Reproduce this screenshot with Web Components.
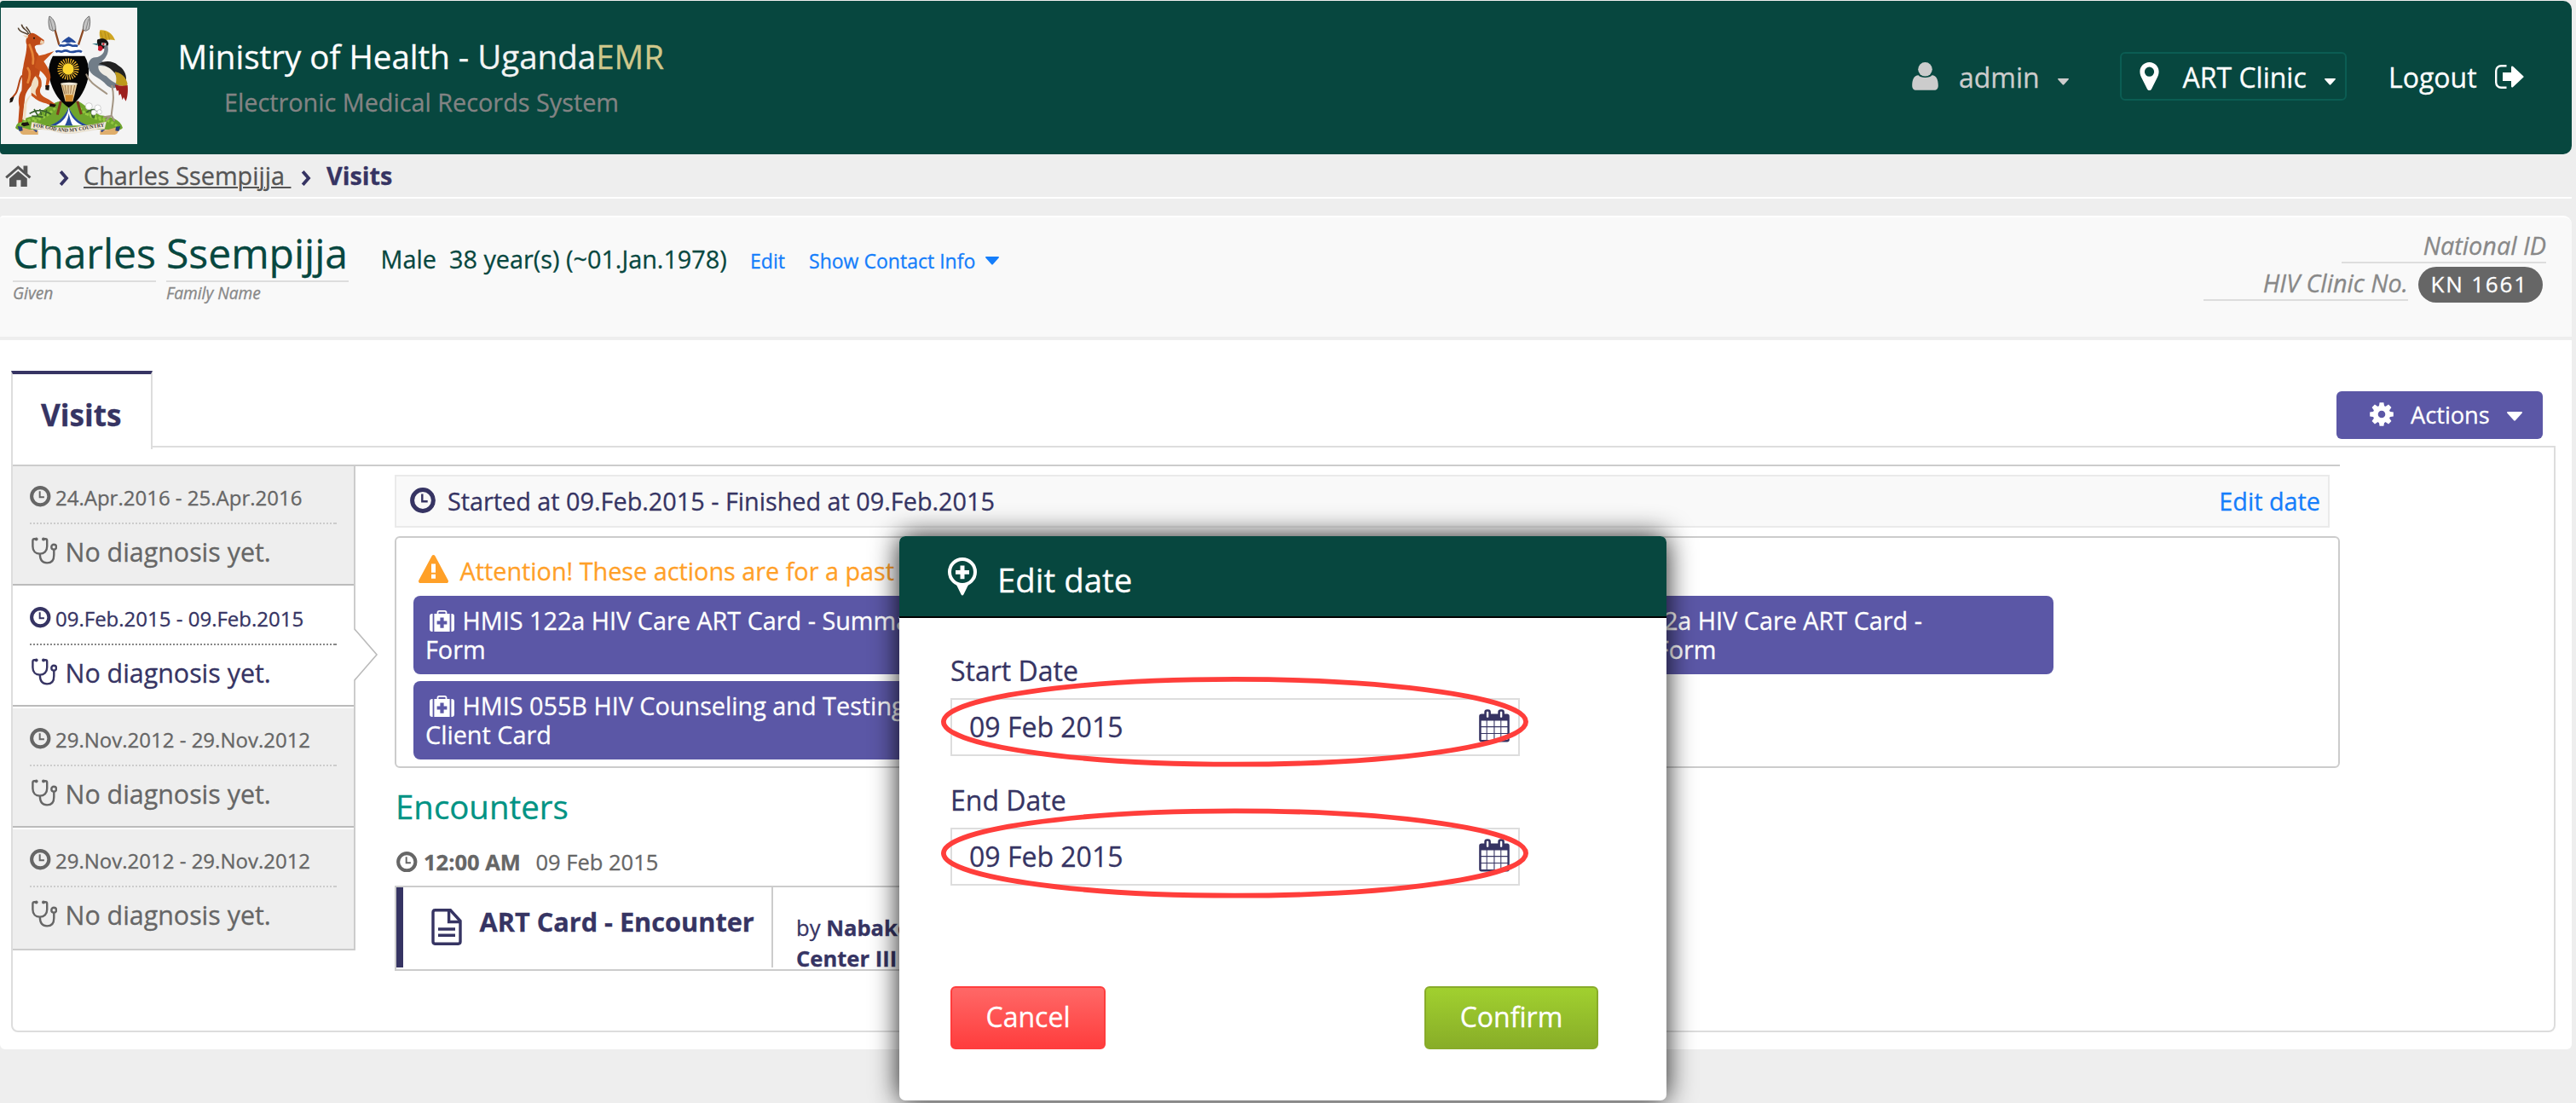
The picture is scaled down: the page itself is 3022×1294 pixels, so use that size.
<!DOCTYPE html>
<html lang="en">
<head>
<meta charset="utf-8">
<title>Visits</title>
<style>
html,body{margin:0;padding:0}
body{width:3022px;height:1294px;overflow:hidden;background:#eee;font-family:"Open Sans","Noto Sans",sans-serif;font-size:28.8px;line-height:40px;color:#363463;-webkit-text-stroke:.3px}
</style>
</head>
<body>
<emr-app></emr-app>
<script>
const define = (name, html, setup) => customElements.define(name, class extends HTMLElement {
  connectedCallback() {
    if (this.shadowRoot) return;
    const root = this.attachShadow({ mode: 'open' });
    root.innerHTML = html;
    if (setup) setup.call(this, root);
  }
});

const ICONS = {
  home: [31, 25, '<path d="M1.2 14.4 15.3 2.2l14.1 12.2" fill="none" stroke="currentColor" stroke-width="3"/><path d="M21.5.6h4.8v9.6l-4.8-4z"/><path d="M5 15.6 15.3 6.8l10.5 8.8V25h-7.4v-7.8h-5V25H5z"/>'],
  chevron: [12, 18, '<path d="M2.2 1.2 9 9l-6.8 7.8" fill="none" stroke="currentColor" stroke-width="3.8"/>'],
  user: [31, 33, '<circle cx="15.5" cy="8.3" r="8.3"/><path d="M7.6 15.2C10 18.8 21 18.8 23.4 15.2c5.200 0 7.400 5.400 7.400 12 0 3.600-1.800 5.600-4.600 5.600H4.800C2 32.800.2 30.800.2 27.200c0-6.600 2.200-12 7.400-12z"/>'],
  pin: [23, 33, '<path fill-rule="evenodd" d="M11.500 0C17.900 0 22.600 5 22.600 11c0 3.200-1 5.300-2.200 7.700l-6.500 13c-1 1.700-3.800 1.700-4.800 0l-6.500-13C1.400 16.300.4 14.200.4 11 .4 5 5.100 0 11.500 0zM11.500 5.600a5.600 5.600 0 1 0 0 11.200 5.600 5.600 0 0 0 0-11.200z"/>'],
  logout: [34, 28, '<path d="M13.500 1.200H7.200a6 6 0 0 0-6 6v13.600a6 6 0 0 0 6 6h6.300" fill="none" stroke="currentColor" stroke-width="2.400"/><path d="M9 9h10V3c0-1.500 1.200-2 2.200-1l12 11.200c.6.600.6 1 0 1.600l-12 11.200c-1 1-2.200.5-2.200-1v-6H9z"/>'],
  caret: [18, 11, '<path d="M1 0h16c1 0 1.300 1 .6 1.700l-7.500 8.400c-.7.800-1.500.8-2.200 0L.4 1.700C-.3 1 0 0 1 0z"/>'],
  clock: [30, 30, '<circle cx="15" cy="15" r="12.400" fill="none" stroke="currentColor" stroke-width="5"/><path d="M14.300 7.500v8.800h6.400" fill="none" stroke="currentColor" stroke-width="2.400"/>'],
  stethoscope: [30, 32, '<g fill="none" stroke="currentColor" stroke-width="2.400"><path d="M5.500 2.200H3.200C1.900 2.200 1.400 3 1.400 4.200V11c0 5.500 3.400 8.600 8.400 8.600s8.400-3.100 8.400-8.600V4.200c0-1.200-.5-2-1.800-2h-2.300"/><path d="M9.800 19.600c0 7 2.600 10.800 8.300 10.800 6 0 8.200-4 8.200-9.500V15"/><circle cx="26.200" cy="11.700" r="2.900"/></g><circle cx="5.600" cy="2.400" r="2"/><circle cx="14" cy="2.400" r="2"/>'],
  warning: [35, 33, '<path fill-rule="evenodd" d="M15.700 1.100c.8-1.400 2.800-1.400 3.600 0l15.400 28.700c.8 1.500-.1 3.200-1.800 3.200H2.100c-1.700 0-2.600-1.700-1.800-3.200zM15 10.500v10.300h5V10.500zm0 12.300v4.900h5v-4.900z"/>'],
  medkit: [29, 25, '<path d="M3.600 4v21H3c-2 0-3-1-3-3V7c0-2 1-3 3-3zM25.400 4v21h.6c2 0 3-1 3-3V7c0-2-1-3-3-3z"/><path fill-rule="evenodd" d="M5.400 4h3.200V2.600C8.600 1 9.600 0 11.200 0h6.600c1.600 0 2.600 1 2.600 2.600V4h3.200v21H5.400zm5-1v1h8.200V3c0-.8-.3-1.200-1.100-1.200h-6c-.8 0-1.100.4-1.100 1.200zM12.400 8.400v4H8.600v4.200h3.800v4.200h4.200v-4.200h3.800v-4.200h-3.800v-4z"/>'],
  document: [36, 43, '<g fill="none" stroke="currentColor" stroke-width="3.400"><path d="M2 4.200c0-1.500.8-2.400 2.400-2.400h18L34 14.500v24.300c0 1.500-.8 2.400-2.400 2.400H4.400c-1.600 0-2.400-.9-2.400-2.400z"/><path d="M20.600 2v13.500H34M8 24h20M8 31.200h20"/></g>'],
  mapplus: [36, 45, '<circle cx="18" cy="17" r="15" fill="none" stroke="currentColor" stroke-width="4"/><path d="M10 30h16l-6.600 13.600c-.6 1.300-2.200 1.300-2.800 0zM15.500 9.500h5V15H26v4.800h-5.500v5.500h-5v-5.500H10V15h5.500z"/>'],
  calendar: [36, 39, '<path fill-rule="evenodd" d="M3 5.600h30c1.800 0 2.800 1 2.800 2.800v27.400c0 1.800-1 2.800-2.800 2.800H3c-1.800 0-2.800-1-2.800-2.800V8.400c0-1.800 1-2.800 2.800-2.800zM2.700 13.500V20h6v-6.500zm7 0V20h7.700v-6.500zm8.800 0V20h6.800v-6.500zm7.800 0V20h7.100v-6.500zM2.700 21.200v6.700h6v-6.700zm7 0v6.700h7.700v-6.700zm8.800 0v6.700h6.800v-6.700zm7.800 0v6.700h7.100v-6.700zM2.700 29v7h6v-7zm7 0v7h7.700v-7zm8.800 0v7h6.800v-7zm7.800 0v7h7.100v-7z"/><rect x="7.600" y="1.500" width="5" height="9.500" rx="2" fill="#fff" stroke="currentColor" stroke-width="2.600"/><rect x="23.600" y="1.500" width="5" height="9.500" rx="2" fill="#fff" stroke="currentColor" stroke-width="2.600"/>'],
  gear: [28, 28, '<circle cx="14" cy="14" r="7.300" fill="none" stroke="currentColor" stroke-width="6"/>' + [0,45,90,135,180,225,270,315].map(a => `<path transform="rotate(${a} 14 14)" d="M11.600.2h4.800l.9 5.200h-6.600z"/>`).join('')]
};

define('emr-icon', '', function (root) {
  const [w, h, body] = ICONS[this.getAttribute('name')];
  const width = +(this.getAttribute('size') || w);
  const height = +(width * h / w).toFixed(2);
  root.innerHTML = `<style>:host{display:inline-block;flex:none;line-height:0;width:${width}px;height:${height}px}svg{display:block}</style>
  <svg width="${width}" height="${height}" viewBox="0 0 ${w} ${h}" fill="currentColor">${body}</svg>`;
});

define('emr-crest', `<style>:host{display:block;flex:none;width:160px;height:160px;background:#f4f4f4}svg{display:block}</style>
<svg width="160" height="160" viewBox="3 27 480 480">
  <path d="M186 78 208 158M302 78 276 158" stroke="#8d4a24" stroke-width="7" fill="none"/>
  <path d="M174 57c14 8 22 24 22 48l-10 4-11-6c-5-18-5-34-1-46zM314 57c-14 8-22 24-22 48l10 4 11-6c5-18 5-34 1-46z" fill="#c4c4c4" stroke="#555" stroke-width="2.500"/>
  <path d="m176 66 10 40M312 66l-10 40" stroke="#666" stroke-width="2"/>
  <path d="M54 450c8-30 44-38 76-44 22-20 48-38 74-48h74c24 14 50 36 74 48 36 4 72 14 80 44-8 12-30 8-50 6H106c-20 2-44 6-52-6z" fill="#6fa52c"/>
  <path d="M70 440c30-24 70-20 100-46M300 400c36 10 84 20 112 44M120 425c30-6 50-20 80-50M280 380c24 24 50 38 90 44" stroke="#93c83f" stroke-width="9" stroke-dasharray="9 7" fill="none"/>
  <path d="M104 400c24-16 50-14 76 2M120 384l14 24M140 384l6 22M164 386l-4 22M112 408l40 4M304 396c16-14 36-14 50 4M318 380l8 34M336 380l-6 36" stroke="#39622a" stroke-width="5" fill="none"/>
  <g fill="#fff" stroke="#bbb" stroke-width="2"><circle cx="313" cy="374" r="12"/><circle cx="344" cy="380" r="11"/><circle cx="330" cy="396" r="9"/><circle cx="350" cy="394" r="8"/></g>
  <path d="M214 356 202 404M272 356l14 46" stroke="#7e3c1c" stroke-width="9"/>
  <path d="M242 376c8 30 30 50 64 66h-126c34-16 54-36 62-66z" fill="#fff"/>
  <path d="M242 376c-2 30-18 52-46 66h-20c32-12 56-36 66-66zM242 376c2 30 20 52 48 66h20c-34-12-58-36-68-66zM242 398c4 20 8 32 14 44h-28c6-12 12-24 14-44z" fill="#244a9b"/>
  <path d="M242 129c20 12 42 34 56 68h-112c14-34 36-56 56-68z" fill="#fff"/>
  <path d="M242 129c10 6 18 12 26 20-8 4-14-2-20 0s-10 4-16 0-12 2-16 0c8-8 16-14 26-20z" fill="#244a9b"/>
  <path d="M208 162c8-6 14 2 22-2s14-4 22 0 14-2 22 2M196 183c10-8 16 2 24-2s14-4 22 0 16 2 24 0 14-4 22 2" stroke="#244a9b" stroke-width="8" fill="none"/>
  <path d="M186 197h112c20 36 18 70 2 110-14 34-34 56-58 72-24-16-44-38-58-72-16-40-18-74 2-110z" fill="#050505"/>
  <circle cx="240" cy="243" r="29" fill="none" stroke="#f3b72e" stroke-width="18" stroke-dasharray="3.500 4"/>
  <circle cx="240" cy="243" r="20" fill="#fdd52f"/>
  <path d="M214 293h58l-10 42-6 22h-26l-6-22z" fill="#e8cfa0"/><path d="M229 334h29l-3 24h-24z" fill="#d08a2c"/>
  <path d="m220 300 8 32M229 300l4 30M240 300v30M251 300l-3 30M263 300l-7 32" stroke="#8c6236" stroke-width="2.500"/>
  <ellipse cx="243" cy="295" rx="29" ry="5" fill="#f6efdf" stroke="#998" stroke-width="1"/>
  <g stroke-linejoin="round">
    <path d="M100 122c10-10 22-6 34 4l20 14c4 8 0 16-10 17-10 2-18 0-22 8l6 18c10 10 14 24 12 44 4 30-4 54-22 66-16 16-28 32-30 50l-4 34-6 52-14 4 4-56c-4-20-4-40 8-58 4-30-2-56 6-84 4-28 12-48 12-78-4-10-4-22 6-35z" fill="#bf4a17"/>
    <path d="M132 196c18 0 34-8 58-16l-36 36c12 18 24 34 24 58l-10 34-8-2 4-30c-10-20-26-30-42-38z" fill="#c9531b"/>
    <path d="M128 262c16 8 20 22 18 42-12 20-4 34 26 46l22 16-4 10-28-12c-26-6-40-18-52-28 0-26 6-50 18-74z" fill="#c9531b"/>
    <path d="M124 268c10 8 14 20 10 34-10 14-12 22-4 38l-22-16c0-20 4-40 16-56zM112 330c-10 18-20 30-18 48l-4 46-8-2 2-50c4-18 14-32 28-42z" fill="#f0dfc4"/>
    <path d="M104 158c8 20 16 40 12 66M98 240c8 10 8 30 0 50" stroke="#e8873a" stroke-width="8" fill="none" stroke-linecap="round"/>
    <path d="M78 266c-12 12-10 40-22 62-6 10-14 14-20 24" stroke="#b04416" stroke-width="6" fill="none"/>
    <path d="M36 346l14-6-6 18-10 4zM78 432l20-2 6 10-20 5-10-6zM176 364l22 4-6 9-18-3zM160 300h14l-2 18-12-2z" fill="#1c1511"/>
    <path d="M98 122c-6-8-30-6-34-24M100 120c0-14-22-16-24-34M106 120c2-10-8-14-14-26" stroke="#54412e" stroke-width="4.500" fill="none"/>
    <path d="m80 124 20 2-4 10zM144 140l12 6-4 10-12-2z" fill="#ecd0b0"/><circle cx="120" cy="134" r="3" fill="#111"/>
  </g>
  <path d="M358 146c-8-14-10-28-6-40 22-2 44 10 53 36-14-4-30-4-47 4z" fill="#cfa521"/><path d="m364 142-10-30M374 140l-6-30M386 140l-6-24" stroke="#a37f15" stroke-width="2"/>
  <path d="M342 140c14-8 36-6 40 14-2 14-14 18-26 18-10-4-16-16-14-32z" fill="#141414"/>
  <path d="m324 154 20-2-2 8z" fill="#3b7f8a"/><path d="m358 150 16 2-2 9-14-2z" fill="#eee"/><circle cx="364" cy="155" r="4" fill="#c2222c"/><path d="M346 162c8-4 14 0 16 8-2 10-12 12-17 6z" fill="#c8182a"/>
  <path d="M378 158c8 22-2 44-20 58 20 10 50 14 66 40 14 26 2 50-10 44-10 20-34 8-46-8-20-22-48-22-58-56-2-14 8-34 26-34 20-2 36-18 30-38z" fill="#717d88"/>
  <path d="M346 226c20-14 50-14 70 4 18 10 30 30 28 52-20-14-34-24-48-28-10-16-30-28-50-28z" fill="#222"/>
  <path d="M346 232c20-4 44 6 58 26 8 16 14 28 12 38-16-4-30-16-42-28-14-6-30-18-28-36z" fill="#efece4"/>
  <path d="M404 252c20 4 38 16 44 40 2 8-2 12-8 12-14-2-26-4-32-10 2-14 2-26-4-42z" fill="#bd991b"/>
  <path d="M404 298c14 4 30 6 45 2 2 20 0 42-6 56l-8-14-4 10-6-22-6 6-2-18-6 2z" fill="#9c1f1c"/>
  <path d="M304 262c12 32 44 46 72 68M394 302c10 40 2 64-2 104l-18 16M392 406l10 18M390 408l-24 4" stroke="#a39583" stroke-width="6" fill="none" stroke-linecap="round"/>
  <path d="M62 444 104 456l30 4v14H82c-12-2-14-14-12-20z" fill="#dfae6c"/><path d="M424 444 382 456l-30 4v14h52c12-2 14-14 12-20z" fill="#dfae6c"/>
  <path d="M62 444l16 2 2 14-12 2zM424 444l-16 2-2 14 12 2zM116 456l16 2-4 8zM370 456l-16 2 4 8z" fill="#243c7c"/>
  <path d="M112 430c40 6 50 18 84 18 30 2 60 2 88-4 30-4 60-8 90-16l-6 26c-30 0-50 6-80 10-34 8-66 8-96-2-30-8-50-6-84-10z" fill="#f3ead9" stroke="#cbbfa8" stroke-width="1"/>
  <path id="ribbon" d="M116 448c30 2 50 4 74 11 32 7 64 7 96 0 30-6 52-11 84-13" fill="none"/>
  <text font-family="Liberation Serif,serif" font-weight="bold" font-size="18.500" fill="#37302a"><textPath href="#ribbon" textLength="254" lengthAdjust="spacingAndGlyphs">FOR GOD AND MY COUNTRY</textPath></text>
</svg>`);

define('emr-header', `<style>
:host{display:flex;box-sizing:border-box;width:3017px;height:180px;margin-top:1px;background:#07473f;border-radius:4px 10px 10px 4px;color:#fff}
emr-crest{margin:8px 0 0 1px}
.brand{padding:39px 0 0 47.500px;flex:1}
.title{font-size:38.5px;line-height:52px;white-space:nowrap}.title b{font-weight:400;color:#cfc78b}.title i{font-style:normal;color:#f2f4f4}
.sub{font-size:28.8px;line-height:40px;margin:8px 0 0 54.500px;color:#838383}
nav{display:flex;width:774px;height:57px;margin-top:60px;align-items:center;font-size:32px;line-height:44px;white-space:nowrap}
.t{padding-top:2px}
.user{display:flex;align-items:center;width:184px;color:#ccc}
.user .t{width:116px;margin-left:24px}
.loc{display:flex;align-items:center;box-sizing:border-box;width:266px;height:57px;margin-left:60px;border:2px solid #0b5d53;border-radius:6px;padding-left:20.5px}
.loc .t{width:166px;margin-left:28px}
.out{display:flex;align-items:center;margin-left:49px}.out .t{width:125px}
emr-icon[name=caret]{margin-top:13px}
</style>
<emr-crest></emr-crest>
<div class="brand"><div class="title">Ministry of Health - <i>Uganda</i><b>EMR</b></div><div class="sub">Electronic Medical Records System</div></div>
<nav>
<div class="user"><emr-icon name="user"></emr-icon><span class="t">admin</span><emr-icon name="caret" size="13"></emr-icon></div>
<div class="loc"><emr-icon name="pin"></emr-icon><span class="t">ART Clinic</span><emr-icon name="caret" size="13"></emr-icon></div>
<div class="out"><span class="t">Logout</span><emr-icon name="logout"></emr-icon></div>
</nav>`);

define('emr-breadcrumbs', `<style>
:host{display:flex;align-items:center;box-sizing:border-box;width:3017px;height:52px;padding-left:6px;border-bottom:2px solid #fff;color:#555;white-space:pre}
.chev{color:#363463;margin-top:6px}
a{text-decoration:underline;text-decoration-thickness:2px;text-underline-offset:2px;width:243.500px;margin-left:17px}
b{color:#363463;margin-left:18px}
</style><emr-icon name="home"></emr-icon><emr-icon class="chev" style="margin-left:32px" name="chevron"></emr-icon><a>Charles Ssempijja </a><emr-icon class="chev" style="margin-left:11.500px" name="chevron"></emr-icon><b>Visits</b>`);

define('emr-name-part', `<style>
:host{display:block;color:#07473f}
.n{font-size:48px;line-height:65px;border-bottom:2px solid #ddd}
em{display:block;font-size:19.2px;line-height:26px;color:#888}
</style><div class="n"><slot></slot></div><em><slot name="label"></slot></em>`);

define('emr-patient-header', `<style>
:host{display:flex;box-sizing:border-box;width:3017px;height:146px;margin-top:20px;padding:9px 30px 0 15px;border-top:2px solid #fff;border-bottom:4px solid #eee;background:#f9f9f9;border-radius:4px 10px 0 0;white-space:nowrap}
.demo{display:flex;margin:20px 0 0 37.500px;color:#07473f}
.demo a{color:#157efb;font-size:23.04px;padding-top:2px}
.demo emr-icon{color:#157efb;margin-top:17px}
.ids{margin:5px 0 0 auto;display:flex;flex-direction:column;align-items:flex-end;gap:4px;font-style:italic;color:#888}
.id{width:240px;box-sizing:border-box;line-height:38px;text-align:right;border-bottom:2px solid #ddd}
.row{display:flex;gap:12px;padding-right:4px;align-items:flex-start}
.badge{box-sizing:border-box;width:146px;height:42px;border-radius:21px;background:#666;color:#fff;font-style:normal;font-size:26px;line-height:40px;letter-spacing:1.8px;padding-left:14.500px}
</style>
<emr-name-part style="width:168px">Charles<span slot="label">Given</span></emr-name-part>
<emr-name-part style="width:214px;margin-left:12px">Ssempijja<span slot="label">Family Name</span></emr-name-part>
<div class="demo"><span style="width:80.500px">Male</span><span style="width:353px">38 year(s) (~01.Jan.1978)</span><a style="width:69px">Edit</a><a style="width:207px">Show Contact Info</a><emr-icon name="caret" size="16"></emr-icon></div>
<div class="ids"><div class="id">National ID</div><div class="row"><div class="id">HIV Clinic No.</div><div class="badge">KN 1661</div></div></div>`);

define('emr-visit', `<style>
:host{display:block;position:relative;box-sizing:border-box;height:142px;padding:20px 20px 0;background:#eee;border-top:2px solid #fff;border-bottom:2px solid #bbb;color:#666;white-space:nowrap}
:host([first]){height:140px;border-top:0}
:host([last]){height:144px;border-bottom-color:#ccc}
:host([active]){background:#fff;color:#363463;--dot:#888}
.date{display:flex;align-items:center;gap:5.500px;font-size:24px;line-height:34px}
.date emr-icon{margin-top:-3px}
.rule{height:2px;margin:12px 0 10px;background:linear-gradient(var(--dot,#ccc),var(--dot,#ccc)) right/4px 2px no-repeat,repeating-linear-gradient(90deg,var(--dot,#ccc) 0 2px,transparent 2px 4px)}
.dx{display:flex;font-size:30.4px;line-height:45px;padding-left:2px}
.dx emr-icon{margin:5px 9.500px 0 0}
.arrow{display:none;position:absolute;left:398px;top:48px}
:host([active]) .arrow{display:block}
</style>
<div class="date"><emr-icon name="clock" size="24.500"></emr-icon><slot></slot></div><div class="rule"></div>
<div class="dx"><emr-icon name="stethoscope"></emr-icon><span>No diagnosis yet.</span></div>
<svg class="arrow" width="32" height="62" viewBox="0 0 32 62"><path d="M2 1 29 31 2 61z" fill="#fff"/><path d="M3 1 29 31 3 61" fill="none" stroke="#bbb" stroke-width="1.600"/></svg>`);

define('emr-form-button', `<style>
:host{display:block;box-sizing:border-box;height:92px;padding:12px 10px 12px 14px;border-radius:8px;background:#5b57a6;color:#fff;line-height:34px}
emr-icon{margin:0 10px 0 4.500px;vertical-align:-2px}
</style><emr-icon name="medkit"></emr-icon><slot></slot>`);

define('emr-visit-details', `<style>
:host{display:block;width:2282px;margin-left:46px;white-space:nowrap}
.status{display:flex;align-items:center;box-sizing:border-box;width:2270px;height:62px;margin-top:10px;padding:0 9px 0 16px;border:2px solid #eaeaea;background:#f9f9f9}
.status emr-icon{margin:-2px 14px 0 0}
.status a{margin-left:auto;color:#157efb}
.box{box-sizing:border-box;height:272px;margin-top:10px;padding:19px 20px 0;border:2px solid #ccc;border-radius:6px}
.warn{display:flex;color:#ffa028;padding-left:6px}.warn emr-icon{margin:1px 13.500px 0 0}
.grid{display:grid;grid-template-columns:626px 626px 626px;gap:8px 23px;margin-top:9px;white-space:normal}
h3{font-weight:400;font-size:38.4px;line-height:50px;margin:20px 0 0 1px;color:#009384}
.time{display:flex;align-items:center;margin:22px 0 0 2px;font-size:25.5px;line-height:36px;color:#666}
.time b{width:131.500px;margin-left:7.500px}
.enc{display:flex;box-sizing:border-box;width:1437px;height:100px;margin-top:10px;padding-bottom:2px;border:2px solid #ccc;overflow:hidden}
.enc .l{box-sizing:border-box;display:flex;width:442px;height:94px;border-left:8px solid #363463;border-right:2px solid #ccc}
.enc .l emr-icon{margin:25px 20.500px 0 33px}
.enc .l b{font-size:30.7px;line-height:42px;margin-top:19px}
.by{height:94px;overflow:hidden;box-sizing:border-box;padding:30px 0 0 27px;font-size:25.6px;line-height:36px}
</style>
<div class="status"><emr-icon name="clock"></emr-icon><span>Started at 09.Feb.2015 - Finished at 09.Feb.2015</span><a>Edit date</a></div>
<div class="box">
<div class="warn"><emr-icon name="warning"></emr-icon>Attention! These actions are for a past</div>
<div class="grid"><emr-form-button>HMIS 122a HIV Care ART Card - Summary Form</emr-form-button><emr-form-button style="grid-column:3">HMIS 122a HIV Care ART Card -<br>Encounter Form</emr-form-button><emr-form-button style="grid-row:2">HMIS 055B HIV Counseling and Testing Client Card</emr-form-button></div>
</div>
<h3>Encounters</h3>
<div class="time"><emr-icon name="clock" size="24.500"></emr-icon><b>12:00 AM</b><span>09 Feb 2015</span></div>
<div class="enc"><div class="l"><emr-icon name="document"></emr-icon><b>ART Card - Encounter</b></div><div class="by">by <b>Nabako</b><br><b>Center III</b></div></div>`);

define('emr-dashboard', `<style>
:host{display:block;box-sizing:border-box;width:3017px;height:832px;padding:36px 0 0 13px;background:#fff;border-radius:0 0 6px 6px}
.bar{display:flex;height:88px;align-items:flex-start}
.tab{position:relative;z-index:1;box-sizing:border-box;width:166px;height:92px;border:solid #ddd;border-width:4px 2px 0;border-top-color:#363463;background:#fff;padding:22.500px 0 0 33px;font-size:35.2px;line-height:48px;font-weight:700}
.actions{display:flex;align-items:center;box-sizing:border-box;width:242px;height:56px;margin:24px 34px 0 auto;padding-left:39px;border-radius:6px;background:#5b57a6;color:#fff;font-size:27.2px}
.actions span{margin-left:20px;width:112.500px}
.actions emr-icon[name=gear]{margin-top:-3px}.actions emr-icon[name=caret]{margin-top:3px}
.panel{box-sizing:border-box;width:2985px;height:688px;border:2px solid #ddd;border-radius:0 0 8px 8px;padding-top:20px}
.inner{display:flex;align-items:flex-start;width:2730px;border-top:2px solid #ccc}
.list{box-sizing:border-box;width:402px;flex:none;border-right:2px solid #ccc}
</style>
<div class="bar"><div class="tab">Visits</div><div class="actions"><emr-icon name="gear"></emr-icon><span>Actions</span><emr-icon name="caret"></emr-icon></div></div>
<div class="panel"><div class="inner">
<div class="list"><emr-visit first>24.Apr.2016 - 25.Apr.2016</emr-visit><emr-visit active>09.Feb.2015 - 09.Feb.2015</emr-visit><emr-visit>29.Nov.2012 - 29.Nov.2012</emr-visit><emr-visit last>29.Nov.2012 - 29.Nov.2012</emr-visit></div>
<emr-visit-details></emr-visit-details>
</div></div>`);

define('emr-date-field', `<style>
:host{display:block;font-size:32px;line-height:44px}
.in{display:flex;align-items:center;justify-content:space-between;box-sizing:border-box;width:668px;height:68px;margin-top:10px;padding:0 10px 0 20px;border:2px solid #ddd;background:#fff}
.in emr-icon{margin-top:-3px}
</style><div><slot name="label"></slot></div><div class="in"><span><slot></slot></span><emr-icon name="calendar"></emr-icon></div>`);

define('emr-dialog', `<style>
:host{position:absolute;left:1055px;top:629px;display:block;box-sizing:border-box;width:900px;height:662px;border-radius:7px;background:#fff;box-shadow:0 0 32px rgba(0,0,0,.9)}
header{display:flex;box-sizing:border-box;height:96px;padding:24.700px 0 0 56px;border-bottom:2px solid #000;border-radius:7px 7px 0 0;background:#07473f;color:#fff;font-size:38.4px;line-height:52px}
header emr-icon{margin-right:23px}
.body{padding:40px 0 0 60px}
emr-date-field+emr-date-field{margin-top:30px}
.btns{display:flex;justify-content:space-between;width:760px;margin-top:118px}
button{box-sizing:border-box;height:74px;margin:0;padding:0 0 3px;border-radius:6px;font:32px/44px "Open Sans",sans-serif;color:#fff;-webkit-text-stroke:.3px}
.c{width:182px;border:2px solid #ff3d3d;background:linear-gradient(#ff6867,#ff3d3d)}
.ok{width:204px;border:2px solid #88ab2a;background:linear-gradient(#a1d02f,#88ad28)}
.marks{position:absolute;left:40px;top:155px;pointer-events:none}
</style>
<header><emr-icon name="mapplus"></emr-icon>Edit date</header>
<div class="body">
<emr-date-field><span slot="label">Start Date</span>09 Feb 2015</emr-date-field>
<emr-date-field><span slot="label">End Date</span>09 Feb 2015</emr-date-field>
<div class="btns"><button class="c">Cancel</button><button class="ok">Confirm</button></div>
</div>
<svg class="marks" width="710" height="280" viewBox="1095 784 710 280" fill="none" stroke="#ff3e3b" stroke-width="5.800"><ellipse cx="1448.500" cy="846.800" rx="341.600" ry="49.900"/><ellipse cx="1448.500" cy="1001" rx="341.600" ry="49.700"/></svg>`);

define('emr-app', `<style>:host{display:block;position:relative;width:3022px;height:1294px;overflow:hidden;background:#eee}main{display:flow-root}</style>
<main><emr-header></emr-header><emr-breadcrumbs></emr-breadcrumbs><emr-patient-header></emr-patient-header><emr-dashboard></emr-dashboard></main>
<emr-dialog></emr-dialog>`);
</script>
</body>
</html>
